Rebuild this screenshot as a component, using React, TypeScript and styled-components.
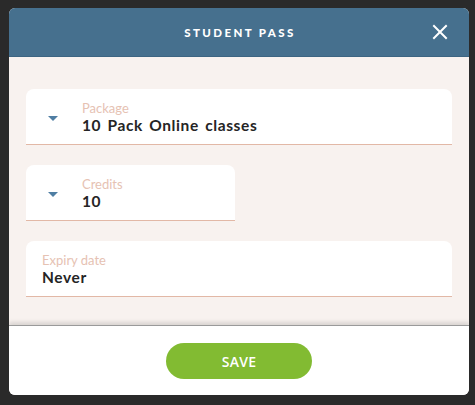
import * as React from 'react';
import styled, { createGlobalStyle } from 'styled-components';

const GlobalStyle = createGlobalStyle`
	html, body {
		margin: 0;
		padding: 0;
		background: #2b2b2b;
		font-family: 'Lato', 'Noto Sans', sans-serif;
	}
`;

const Backdrop = styled.div`
	width: 475px;
	height: 405px;
	box-sizing: border-box;
	padding: 8px 6px 10px 9px;
	background: #2a2a2a;
`;

const Modal = styled.div`
	display: flex;
	flex-direction: column;
	height: 100%;
	border-radius: 6px;
	overflow: hidden;
	background: #f8f2ef;
`;

const Header = styled.div`
	position: relative;
	display: flex;
	align-items: center;
	justify-content: center;
	height: 48px;
	flex-shrink: 0;
	background: #46708e;
	border-bottom: 1px solid #3d6582;
`;

const Title = styled.div`
	color: #fff;
	font-family: 'Lato', sans-serif;
	font-weight: 900;
	font-size: 11.5px;
	letter-spacing: 2.4px;
	padding-left: 2px;
`;

const CloseButton = styled.button`
	position: absolute;
	right: 21px;
	top: 16px;
	width: 16px;
	height: 16px;
	padding: 0;
	border: none;
	background: transparent;
	cursor: pointer;
`;

const Body = styled.div`
	flex: 1;
	display: flex;
	flex-direction: column;
	gap: 20px;
	padding: 32px 17px 0 17px;
`;

const Field = styled.div<{ $narrow?: boolean; $noCaret?: boolean }>`
	display: flex;
	align-items: center;
	box-sizing: border-box;
	width: ${props => props.$narrow ? '209px' : '100%'};
	height: 56px;
	background: #fff;
	border-radius: 8px 8px 0 0;
	border-bottom: 1px solid #e2b8a6;
	padding-left: ${props => props.$noCaret ? '16px' : '0'};
`;

const Caret = styled.div`
	width: 0;
	height: 0;
	margin-left: 22px;
	margin-right: 24px;
	border-left: 5px solid transparent;
	border-right: 5px solid transparent;
	border-top: 5px solid #4f7ea3;
	margin-top: 4px;
`;

const FieldText = styled.div`
	display: flex;
	flex-direction: column;
	padding-top: 2px;
`;

const Label = styled.div`
	color: #e6c2b3;
	font-size: 13px;
	line-height: 15px;
`;

const Value = styled.div`
	color: #252525;
	font-weight: 700;
	font-size: 15.5px;
	line-height: 19px;
	letter-spacing: 0.6px;
	word-spacing: 2px;
`;

const Footer = styled.div`
	flex-shrink: 0;
	display: flex;
	justify-content: center;
	align-items: flex-start;
	height: 70px;
	padding-top: 17px;
	box-sizing: border-box;
	background: #fff;
	border-top: 1px solid #9a9a9a;
	box-shadow: 0 -3px 4px rgba(0, 0, 0, 0.12);
`;

const SaveButton = styled.button`
	width: 146px;
	height: 36px;
	border: none;
	border-radius: 18px;
	background: #82bb32;
	color: #fff;
	font-family: 'Open Sans', sans-serif;
	font-weight: 600;
	font-size: 14px;
	letter-spacing: 0.3px;
	cursor: pointer;
`;

interface FieldProps {
	label: string;
	value: string;
	caret?: boolean;
	narrow?: boolean;
}

function FormField(props: FieldProps) {
	return (
		<Field $narrow={props.narrow} $noCaret={!props.caret}>
			{props.caret ? <Caret/> : null}
			<FieldText>
				<Label>{props.label}</Label>
				<Value>{props.value}</Value>
			</FieldText>
		</Field>
	);
}

export default function App() {
	return (
		<>
			<GlobalStyle/>
			<Backdrop>
				<Modal>
					<Header>
						<Title>STUDENT PASS</Title>
						<CloseButton aria-label="Close">
							<svg width="16" height="16" viewBox="0 0 16 16">
								<path d="M2 2 L14 14 M14 2 L2 14" stroke="#fff" strokeWidth="2" strokeLinecap="square"/>
							</svg>
						</CloseButton>
					</Header>
					<Body>
						<FormField label="Package" value="10 Pack Online classes" caret/>
						<FormField label="Credits" value="10" caret narrow/>
						<FormField label="Expiry date" value="Never"/>
					</Body>
					<Footer>
						<SaveButton>SAVE</SaveButton>
					</Footer>
				</Modal>
			</Backdrop>
		</>
	);
}
